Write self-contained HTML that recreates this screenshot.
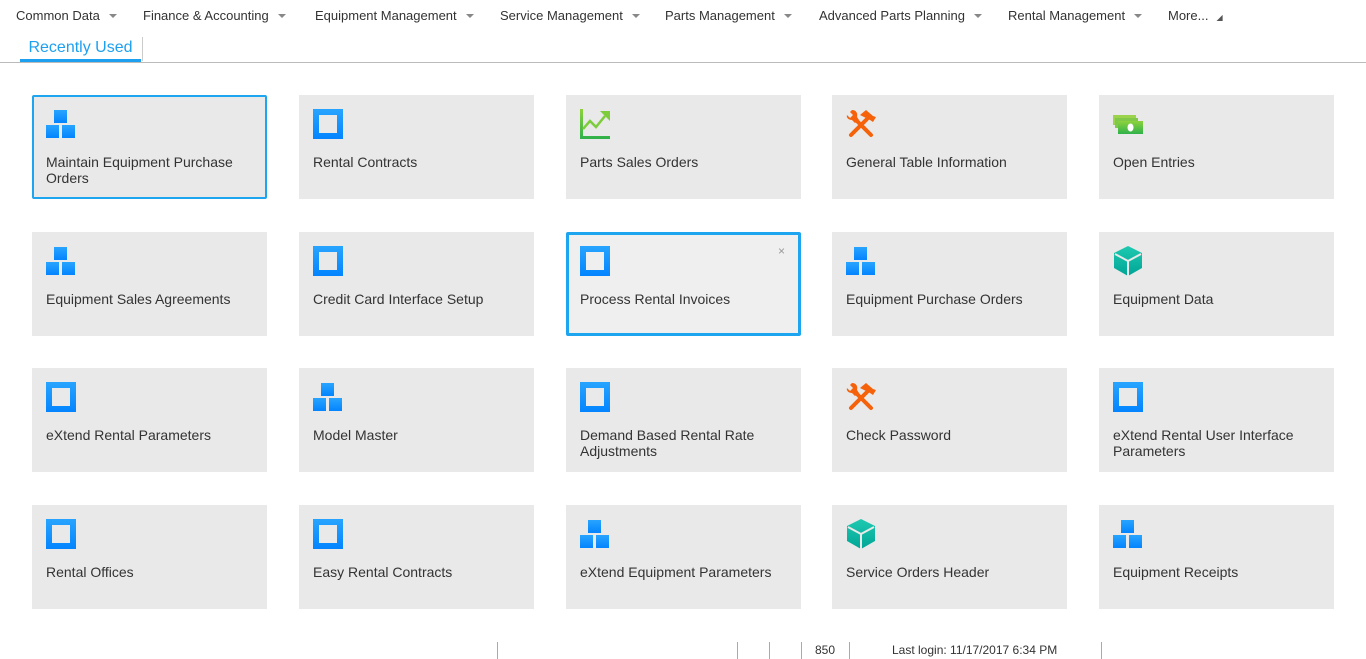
<!DOCTYPE html>
<html><head><meta charset="utf-8"><style>
body{margin:0;width:1366px;height:659px;background:#fff;font-family:"Liberation Sans",Arial,sans-serif;position:relative;overflow:hidden}
.nav{position:absolute;top:8px;font-size:13px;color:#333}
.nav span.c{display:inline-block;width:0;height:0;border-left:4px solid transparent;border-right:4px solid transparent;border-top:4px solid #888;margin-left:9px;vertical-align:2px}
.tab{position:absolute;left:20px;top:35px;width:121px;height:24px;border-bottom:3px solid #1ea0f0;color:#1ea0f0;font-size:16px;text-align:center;line-height:25px}
.tabsep{position:absolute;left:142px;top:37px;height:24px;border-left:1px solid #ccc}
.line{position:absolute;left:0;right:0;top:62px;border-top:1px solid #bbb}
.t{position:absolute;width:235px;height:104px;background:#e9e9e9;box-sizing:border-box}
.t.s1{border:2px solid #1ea5ef;border-radius:2px}
.t.s2{border:3px solid #1ea5ef;border-radius:2px;background:#efefef}
.lbl{position:absolute;left:14px;top:59px;width:205px;font-size:14px;color:#333;line-height:16px}
.t.s1 .lbl{left:12px;top:57px}.t.s2 .lbl{left:11px;top:56px}
.ic{position:absolute;left:14px;top:14px;width:30px;height:30px}
.t.s1 .ic{left:12px;top:12px}.t.s2 .ic{left:11px;top:11px}
.foot{position:absolute;top:642px;height:17px;border-left:1px solid #aaa}
.ft{position:absolute;top:643px;font-size:12px;color:#333}
</style></head><body>
<div class="nav" style="left:16px">Common Data<span class="c"></span></div>
<div class="nav" style="left:143px">Finance &amp; Accounting<span class="c"></span></div>
<div class="nav" style="left:315px">Equipment Management<span class="c"></span></div>
<div class="nav" style="left:500px">Service Management<span class="c"></span></div>
<div class="nav" style="left:665px">Parts Management<span class="c"></span></div>
<div class="nav" style="left:819px">Advanced Parts Planning<span class="c"></span></div>
<div class="nav" style="left:1008px">Rental Management<span class="c"></span></div>
<div class="nav" style="left:1168px">More...<span style="font-size:8px;margin-left:8px;color:#555">&#9698;</span></div>
<div class="tab">Recently Used</div><div class="tabsep"></div>
<div class="line"></div>

<svg width="0" height="0" style="position:absolute"><defs>
<linearGradient id="b" x1="0" y1="0" x2="0" y2="1"><stop offset="0" stop-color="#28a4ff"/><stop offset="1" stop-color="#0484ff"/></linearGradient>
<linearGradient id="g" x1="0" y1="0" x2="0" y2="1"><stop offset="0" stop-color="#8dd23c"/><stop offset="1" stop-color="#2fb14a"/></linearGradient>
<linearGradient id="tq" x1="0" y1="0" x2="0" y2="1"><stop offset="0" stop-color="#1fc9b0"/><stop offset="1" stop-color="#00a596"/></linearGradient>
<symbol id="blk" viewBox="0 0 30 30"><rect x="8" y="1" width="13" height="13" fill="url(#b)"/><rect x="0" y="16" width="13" height="13" fill="url(#b)"/><rect x="16" y="16" width="13" height="13" fill="url(#b)"/></symbol>
<symbol id="sq" viewBox="0 0 30 30"><path d="M0 0H30V30H0ZM6 6V24H24V6Z" fill="url(#b)" fill-rule="evenodd"/></symbol>
<symbol id="chart" viewBox="0 0 30 30"><path d="M0 0H3V27H30V30H0Z" fill="url(#g)"/><path d="M3 20L10 12L16 18L25 7" stroke="#7ccc3c" stroke-width="2.5" fill="none"/><path d="M20 2H30V12Z" fill="#7ccc3c"/></symbol>
<symbol id="tool" viewBox="0 0 30 30"><g stroke="#f5620a" stroke-width="4" stroke-linecap="round"><path d="M5 26L21 10"/><path d="M25 26L9 10"/></g><path d="M14 6L20 1L27 7L30 8L27 13L24 11Z" fill="#f5620a"/><path d="M1 6L4 9L7 6L4 3L6 1C10 1 12 4 11 8L13 11L9 14L6 11C3 11 0 9 1 6Z" fill="#f5620a"/></symbol>
<symbol id="money" viewBox="0 0 30 30"><rect x="0" y="6" width="23" height="3" fill="#9cd34c"/><rect x="0" y="6" width="3" height="10" fill="#9cd34c"/><rect x="2" y="9" width="23" height="3" fill="#7fc84a"/><rect x="2" y="9" width="3" height="10" fill="#7fc84a"/><rect x="5" y="12" width="25" height="13" fill="url(#g)"/><ellipse cx="17.5" cy="18.5" rx="3" ry="4" fill="#fff"/></symbol>
<symbol id="cube" viewBox="0 0 30 30"><path d="M15 0L29 7V22L15 30L1 22V7Z" fill="url(#tq)"/><path d="M2 8L15 15L28 8M15 15V30" stroke="#e9e9e9" stroke-width="2" fill="none"/></symbol>
</defs></svg>

<div class="t s1" style="left:32px;top:95px"><svg class="ic"><use href="#blk"/></svg><div class="lbl">Maintain Equipment Purchase Orders</div></div>
<div class="t" style="left:299px;top:95px"><svg class="ic"><use href="#sq"/></svg><div class="lbl">Rental Contracts</div></div>
<div class="t" style="left:566px;top:95px"><svg class="ic"><use href="#chart"/></svg><div class="lbl">Parts Sales Orders</div></div>
<div class="t" style="left:832px;top:95px"><svg class="ic"><use href="#tool"/></svg><div class="lbl">General Table Information</div></div>
<div class="t" style="left:1099px;top:95px"><svg class="ic"><use href="#money"/></svg><div class="lbl">Open Entries</div></div>

<div class="t" style="left:32px;top:232px"><svg class="ic"><use href="#blk"/></svg><div class="lbl">Equipment Sales Agreements</div></div>
<div class="t" style="left:299px;top:232px"><svg class="ic"><use href="#sq"/></svg><div class="lbl">Credit Card Interface Setup</div></div>
<div class="t s2" style="left:566px;top:232px"><svg class="ic"><use href="#sq"/></svg><div class="lbl">Process Rental Invoices</div><div style="position:absolute;right:13px;top:9px;font-size:12px;color:#999">×</div></div>
<div class="t" style="left:832px;top:232px"><svg class="ic"><use href="#blk"/></svg><div class="lbl">Equipment Purchase Orders</div></div>
<div class="t" style="left:1099px;top:232px"><svg class="ic"><use href="#cube"/></svg><div class="lbl">Equipment Data</div></div>

<div class="t" style="left:32px;top:368px"><svg class="ic"><use href="#sq"/></svg><div class="lbl">eXtend Rental Parameters</div></div>
<div class="t" style="left:299px;top:368px"><svg class="ic"><use href="#blk"/></svg><div class="lbl">Model Master</div></div>
<div class="t" style="left:566px;top:368px"><svg class="ic"><use href="#sq"/></svg><div class="lbl">Demand Based Rental Rate Adjustments</div></div>
<div class="t" style="left:832px;top:368px"><svg class="ic"><use href="#tool"/></svg><div class="lbl">Check Password</div></div>
<div class="t" style="left:1099px;top:368px"><svg class="ic"><use href="#sq"/></svg><div class="lbl">eXtend Rental User Interface Parameters</div></div>

<div class="t" style="left:32px;top:505px"><svg class="ic"><use href="#sq"/></svg><div class="lbl">Rental Offices</div></div>
<div class="t" style="left:299px;top:505px"><svg class="ic"><use href="#sq"/></svg><div class="lbl">Easy Rental Contracts</div></div>
<div class="t" style="left:566px;top:505px"><svg class="ic"><use href="#blk"/></svg><div class="lbl">eXtend Equipment Parameters</div></div>
<div class="t" style="left:832px;top:505px"><svg class="ic"><use href="#cube"/></svg><div class="lbl">Service Orders Header</div></div>
<div class="t" style="left:1099px;top:505px"><svg class="ic"><use href="#blk"/></svg><div class="lbl">Equipment Receipts</div></div>

<div class="foot" style="left:497px"></div>
<div class="foot" style="left:737px"></div>
<div class="foot" style="left:769px"></div>
<div class="foot" style="left:801px"></div>
<div class="ft" style="left:815px">850</div>
<div class="foot" style="left:849px"></div>
<div class="ft" style="left:892px">Last login: 11/17/2017 6:34 PM</div>
<div class="foot" style="left:1101px"></div>
</body></html>
